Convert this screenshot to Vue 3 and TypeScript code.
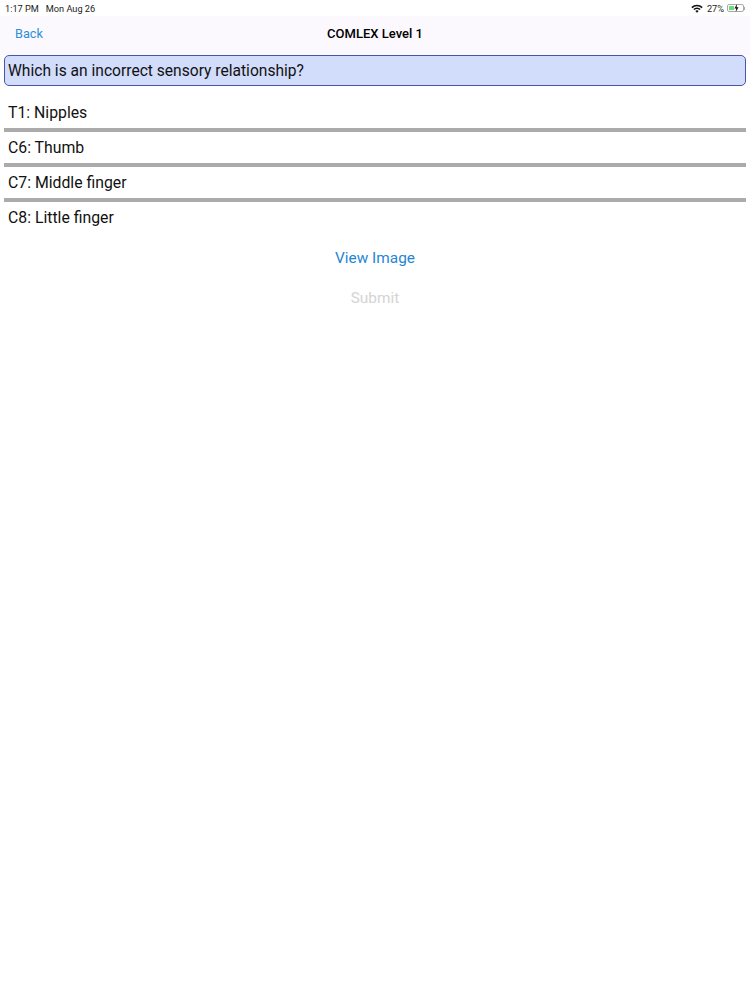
<script setup lang="ts">
const answers = ['T1: Nipples', 'C6: Thumb', 'C7: Middle finger', 'C8: Little finger'];
</script>

<template>
  <div class="screen">
    <div class="status-bar">
      <span class="status-time">1:17 PM</span>
      <span class="status-date">Mon Aug 26</span>
      <span class="status-right">
        <svg class="wifi" width="12" height="9" viewBox="0 0 12 9">
          <path d="M0.3 3A8.2 8.2 0 0 1 11.7 3L10.6 4.2A6.6 6.6 0 0 0 1.4 4.2Z" fill="#111" />
          <path d="M2.3 5A5.3 5.3 0 0 1 9.7 5L8.6 6.1A3.8 3.8 0 0 0 3.4 6.1Z" fill="#111" />
          <path d="M4.3 7A2.4 2.4 0 0 1 7.7 7L6 8.8Z" fill="#111" />
        </svg>
        <span class="percent">27%</span>
        <span class="battery">
          <span class="battery-body">
            <span class="battery-level"></span>
            <svg class="bolt" width="5" height="8" viewBox="0 0 5 8">
              <path d="M3 0L0.4 4.5H2.2L1.7 8L4.6 3.3H2.7Z" fill="#111" />
            </svg>
          </span>
          <span class="battery-cap"></span>
        </span>
      </span>
    </div>

    <div class="nav-bar">
      <a class="back">Back</a>
      <span class="nav-title">COMLEX Level 1</span>
    </div>

    <div class="content">
      <div class="question">Which is an incorrect sensory relationship?</div>
      <ul class="answers">
        <li v-for="answer in answers" :key="answer" class="answer">{{ answer }}</li>
      </ul>
      <a class="view-image">View Image</a>
      <a class="submit">Submit</a>
    </div>
  </div>
</template>

<style>
html,
body {
  background: #fff;
}
</style>

<style scoped>
.screen {
  width: 750px;
  height: 1000px;
  overflow: hidden;
  background: #fff;
  color: #000;
  font-family: Roboto, 'Liberation Sans', sans-serif;
}

.status-bar {
  height: 16px;
  display: flex;
  align-items: center;
  padding: 0 5px;
  font-size: 9.2px;
  color: #222;
  background: #fff;
}

.status-date {
  margin-left: 7px;
}

.status-right {
  margin-left: auto;
  display: flex;
  align-items: center;
  gap: 3px;
}

.wifi {
  margin-right: 1px;
}

.battery {
  display: flex;
  align-items: center;
}

.battery-body {
  position: relative;
  width: 17px;
  height: 8px;
  border: 1px solid #aaa;
  border-radius: 2px;
  padding: 1px;
  box-sizing: border-box;
  display: block;
}

.battery-level {
  display: block;
  width: 5px;
  height: 100%;
  background: #6fd97f;
}

.bolt {
  position: absolute;
  left: 6px;
  top: -1px;
}

.battery-cap {
  width: 1px;
  height: 3px;
  background: #aaa;
}

.nav-bar {
  position: relative;
  height: 34px;
  padding-bottom: 5px;
  display: flex;
  align-items: center;
  justify-content: center;
  background: #fbf9fd;
}

.back {
  position: absolute;
  left: 15px;
  font-size: 12.7px;
  color: #2e8fd8;
}

.nav-title {
  font-size: 13px;
  font-weight: 500;
}

.content {
  display: flex;
  flex-direction: column;
  align-items: center;
  padding: 0 4px;
}

.question {
  align-self: stretch;
  height: 31px;
  box-sizing: border-box;
  display: flex;
  align-items: center;
  padding: 0 3px;
  background: #d2dcfb;
  border: 1px solid #4a55a8;
  border-radius: 5px;
  font-size: 15.6px;
  color: #111;
}

.answers {
  align-self: stretch;
  list-style: none;
  margin: 11px 0 0;
  padding: 0;
}

.answer {
  height: 35px;
  box-sizing: border-box;
  display: flex;
  align-items: center;
  padding-left: 4px;
  font-size: 15.8px;
  color: #111;
  border-bottom: 4px solid #ababab;
}

.answer:last-child {
  height: 31px;
  border-bottom: 0;
}

.view-image {
  margin-top: 15px;
  font-size: 15.4px;
  line-height: 20px;
  color: #1f86d4;
}

.submit {
  margin-top: 19.5px;
  font-size: 15.4px;
  line-height: 20px;
  color: #d4d4d4;
}
</style>
